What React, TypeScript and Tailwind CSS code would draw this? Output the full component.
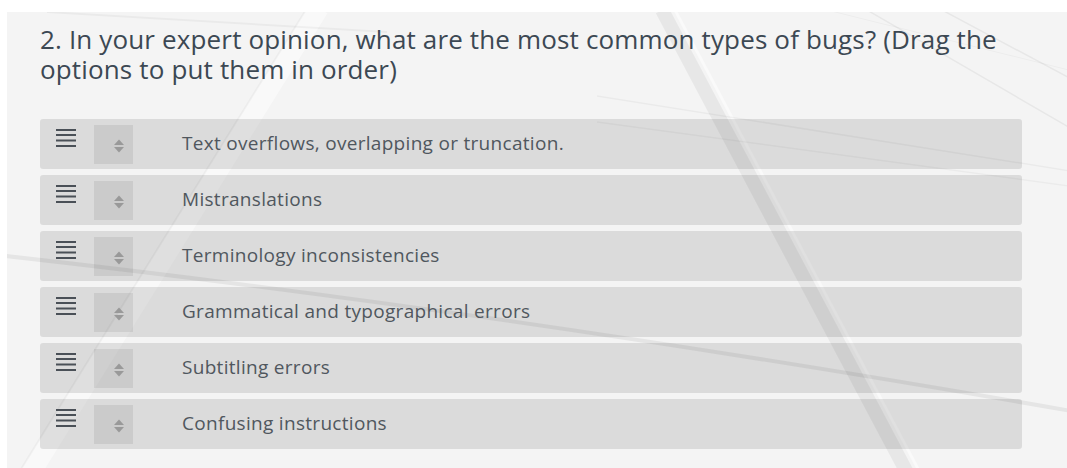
import React from "react";

const OPTIONS = [
  "Text overflows, overlapping or truncation.",
  "Mistranslations",
  "Terminology inconsistencies",
  "Grammatical and typographical errors",
  "Subtitling errors",
  "Confusing instructions",
];

function Backdrop() {
  // decorative streaks behind the question panel
  return (
    <svg
      aria-hidden
      className="pointer-events-none absolute inset-0 h-full w-full"
      viewBox="0 0 1060 456"
      preserveAspectRatio="none"
    >
      <line x1="312" y1="-4" x2="18" y2="470" stroke="#ffffff" strokeOpacity="0.45" strokeWidth="20" />
      <line x1="300" y1="-4" x2="6" y2="470" stroke="#000000" strokeOpacity="0.03" strokeWidth="2" />
      <line x1="655" y1="-2" x2="905" y2="470" stroke="#000000" strokeOpacity="0.05" strokeWidth="14" />
      <line x1="668" y1="-2" x2="918" y2="470" stroke="#ffffff" strokeOpacity="0.5" strokeWidth="3" />
      <path d="M-10 243 Q 500 300 1070 400" fill="none" stroke="#000000" strokeOpacity="0.06" strokeWidth="4" />
      <path d="M40 0 Q 200 10 380 20" fill="none" stroke="#000000" strokeOpacity="0.04" strokeWidth="2" />
      <line x1="590" y1="84" x2="1070" y2="160" stroke="#000000" strokeOpacity="0.04" strokeWidth="1.5" />
      <line x1="590" y1="110" x2="1070" y2="175" stroke="#000000" strokeOpacity="0.035" strokeWidth="1.5" />
      <line x1="860" y1="-2" x2="1070" y2="120" stroke="#000000" strokeOpacity="0.05" strokeWidth="1.5" />
      <line x1="935" y1="-2" x2="1070" y2="70" stroke="#000000" strokeOpacity="0.05" strokeWidth="1.5" />
      <line x1="820" y1="-2" x2="1070" y2="60" stroke="#000000" strokeOpacity="0.03" strokeWidth="1" />
    </svg>
  );
}

function DragLines() {
  return (
    <svg width="20" height="18" viewBox="0 0 20 18" className="shrink-0">
      <rect x="0" y="0" width="20" height="2" fill="#4a5057" />
      <rect x="0" y="5" width="20" height="2" fill="#4a5057" />
      <rect x="0" y="10.5" width="20" height="2" fill="#4a5057" />
      <rect x="0" y="16" width="20" height="2" fill="#4a5057" />
    </svg>
  );
}

function SortCaret() {
  return (
    <svg width="12" height="14" viewBox="0 0 12 14">
      <path d="M1 6 L6 0.5 L11 6 Z" fill="#999999" />
      <path d="M1 8 L11 8 L6 13.5 Z" fill="#999999" />
    </svg>
  );
}

function OptionRow({ label }: { label: string }) {
  return (
    <li className="flex h-[50px] items-center rounded-[3px] bg-black/[0.1]">
      <div className="ml-[16px] self-start pt-[10px]">
        <DragLines />
      </div>
      <div className="ml-[18px] mt-[6px] h-[39px] w-[39px] self-start bg-black/[0.07] pl-[19px] pt-[14px]">
        <SortCaret />
      </div>
      <span className="ml-[49px] -mt-[2px] text-[19px] tracking-[0.3px] text-[#50575e]">{label}</span>
    </li>
  );
}

export default function App() {
  return (
    <div
      className="h-[468px] w-[1067px] overflow-hidden bg-white pl-[7px] pt-[12px]"
      style={{ fontFamily: '"Open Sans", "Noto Sans", sans-serif' }}
    >
      <section className="relative h-[456px] overflow-hidden bg-[#f4f4f4] pl-[33px] pr-[45px] pt-[12px]">
        <Backdrop />
        <div className="relative">
          <h2 className="text-[26px] leading-[30px] tracking-[0.15px] text-[#3c4853]">
            2. In your expert opinion, what are the most common types of bugs? (Drag the options to put them in order)
          </h2>
          <ul className="mt-[35px] flex flex-col gap-[6px]">
            {OPTIONS.map((o) => (
              <OptionRow key={o} label={o} />
            ))}
          </ul>
        </div>
      </section>
    </div>
  );
}
